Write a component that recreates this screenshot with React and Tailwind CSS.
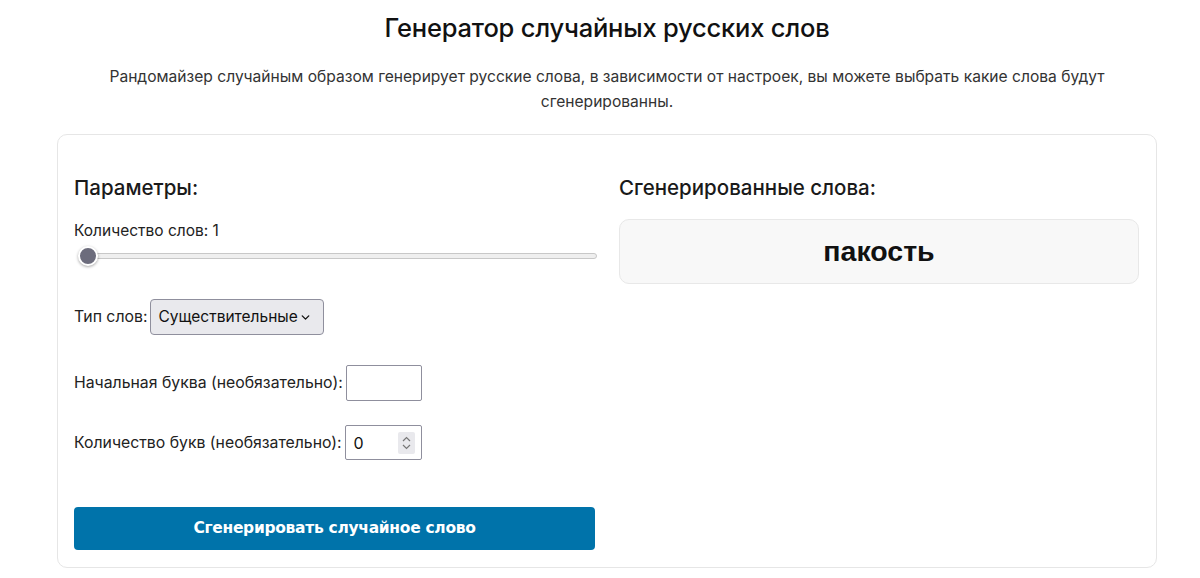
import { ChevronDown } from 'lucide-react'

const FONT = { fontFamily: 'Inter, "Noto Sans", sans-serif' }

export default function App() {
  return (
    <div className="min-h-[578px] bg-white text-[#1d1d1d]" style={FONT}>
      <div className="ml-[57px] w-[1100px]">
        {/* Header */}
        <h1 className="pt-[11px] text-center text-[25.5px] font-medium leading-[34px] tracking-[-0.2px] text-[#111]">
          Генератор случайных русских слов
        </h1>
        <p className="mx-auto mt-[19px] w-[1040px] text-center text-[15.6px] leading-[25px] text-[#333]">
          Рандомайзер случайным образом генерирует русские слова, в зависимости от настроек, вы можете выбрать какие слова будут сгенерированны.
        </p>

        {/* Card */}
        <div className="mt-[20px] grid h-[434px] grid-cols-[523px_520px] gap-[22px] rounded-[10px] border border-[#e6e6e6] px-[16px] pt-[40px]">
          {/* Parameters */}
          <div>
            <h2 className="text-[20.5px] font-medium leading-[26px] text-[#1a1a1a]">Параметры:</h2>
            <p className="mt-[20px] text-[15.5px] leading-[20px] text-[#222]">Количество слов: 1</p>
            <Slider />

            <div className="mt-[31px] flex items-center gap-[3px] text-[15.8px]">
              <span className="text-[#222]">Тип слов:</span>
              <div className="flex h-[36px] w-[174px] items-center justify-between rounded-[4px] border border-[#8f8f9d] bg-[#e9e9ed] pl-[7px] pr-[11px] text-[15.5px] text-[#111]">
                <span>Существительные</span>
                <ChevronDown size={13} strokeWidth={2.5} />
              </div>
            </div>

            <div className="mt-[30px] flex items-center gap-[3px] text-[15.8px]">
              <span className="text-[#222]">Начальная буква (необязательно):</span>
              <div className="h-[36px] w-[76px] rounded-[2px] border border-[#8f8f9d] bg-white" />
            </div>

            <div className="mt-[24px] flex items-center gap-[3px] text-[15.8px]">
              <span className="text-[#222]">Количество букв (необязательно):</span>
              <div className="flex h-[35px] w-[77px] items-center justify-between rounded-[2px] border border-[#8f8f9d] bg-white pl-[8px] pr-[6px]">
                <span className="text-[16px] text-[#111]">0</span>
                <div className="flex h-[22px] w-[17px] flex-col items-center justify-center rounded-[2px] bg-[#e9e9ed] text-[#777]">
                  <svg width="9" height="16" viewBox="0 0 9 16" fill="none" stroke="currentColor" strokeWidth="1.2">
                    <path d="M1 6 L4.5 2.5 L8 6" />
                    <path d="M1 10 L4.5 13.5 L8 10" />
                  </svg>
                </div>
              </div>
            </div>

            <button className="mt-[47px] flex h-[43px] w-[521px] items-center justify-center rounded-[4px] bg-[#0073aa] text-[15.5px] font-bold text-white" style={{ fontFamily: 'Tahoma, "DejaVu Sans", sans-serif', letterSpacing: '-0.3px' }}>
              Сгенерировать случайное слово
            </button>
          </div>

          {/* Output */}
          <div>
            <h2 className="text-[20.5px] font-medium leading-[26px] text-[#1a1a1a]">Сгенерированные слова:</h2>
            <div className="mt-[18px] flex h-[65px] items-center justify-center rounded-[10px] border border-[#e8e8e8] bg-[#f8f8f8]">
              <span className="text-[28.5px] font-bold text-[#111]" style={{ fontFamily: '"Liberation Sans", Arial, sans-serif' }}>пакость</span>
            </div>
          </div>
        </div>
      </div>
    </div>
  )
}

function Slider() {
  return (
    <div className="relative mt-[3px] flex h-[24px] items-center pl-[6px]">
      <div className="h-[6px] w-full rounded-full border border-[#c8c8c8] bg-[#efefef]" />
      <div className="absolute left-[4px] top-[2px] h-[20px] w-[20px] rounded-full border-[2px] border-white bg-[#6c6c7c] shadow-[0_1px_3px_rgba(0,0,0,0.35)]" />
    </div>
  )
}
